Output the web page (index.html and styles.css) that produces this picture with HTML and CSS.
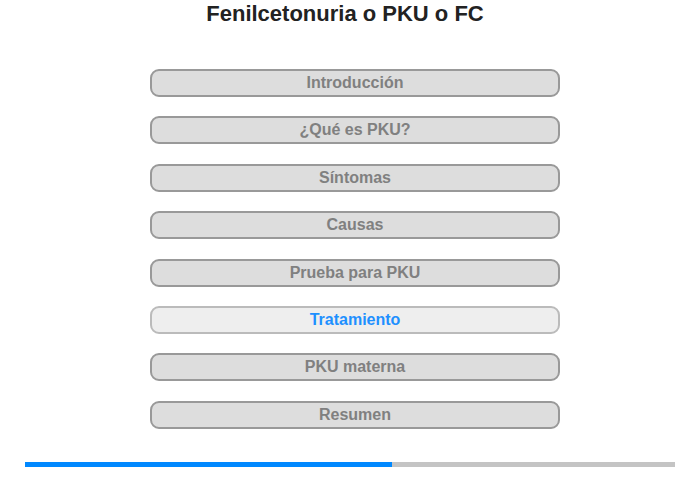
FILE: index.html
```html
<!DOCTYPE html>
<html lang="es">
<head>
<meta charset="utf-8">
<title>Fenilcetonuria o PKU o FC</title>
<link rel="stylesheet" href="styles.css">
</head>
<body>
<div class="page">
  <h1 class="title">Fenilcetonuria o PKU o FC</h1>
  <nav class="menu">
    <div class="item">Introducción</div>
    <div class="item">¿Qué es PKU?</div>
    <div class="item">Síntomas</div>
    <div class="item">Causas</div>
    <div class="item">Prueba para PKU</div>
    <div class="item active">Tratamiento</div>
    <div class="item">PKU materna</div>
    <div class="item">Resumen</div>
  </nav>
  <div class="progress"><div class="progress-fill" style="width:56.5%"></div></div>
</div>
</body>
</html>
```

FILE: styles.css
```css
html, body {
  margin: 0;
  padding: 0;
  background: #fff;
}
.page {
  width: 700px;
  height: 480px;
  font-family: "Liberation Sans", Arial, sans-serif;
  display: flex;
  flex-direction: column;
}
.title {
  margin: 0;
  padding: 1px 10px 0 0;
  height: 28px;
  font-size: 22px;
  line-height: 26px;
  font-weight: bold;
  color: #222;
  text-align: center;
}
.menu {
  margin: 40px 0 0 150px;
  width: 410px;
  display: flex;
  flex-direction: column;
  gap: 19.4px;
}
.item {
  box-sizing: border-box;
  height: 28px;
  border: 2px solid #999;
  border-radius: 9px;
  background: #ddd;
  color: #808080;
  font-size: 16px;
  font-weight: bold;
  line-height: 24px;
  text-align: center;
}
.item.active {
  background: #eee;
  border-color: #bbb;
  color: #1e90ff;
}
.progress {
  margin: 33px 0 0 25px;
  width: 650px;
  height: 5px;
  background: #c4c4c4;
}
.progress-fill {
  height: 100%;
  background: #0088ff;
}
```
